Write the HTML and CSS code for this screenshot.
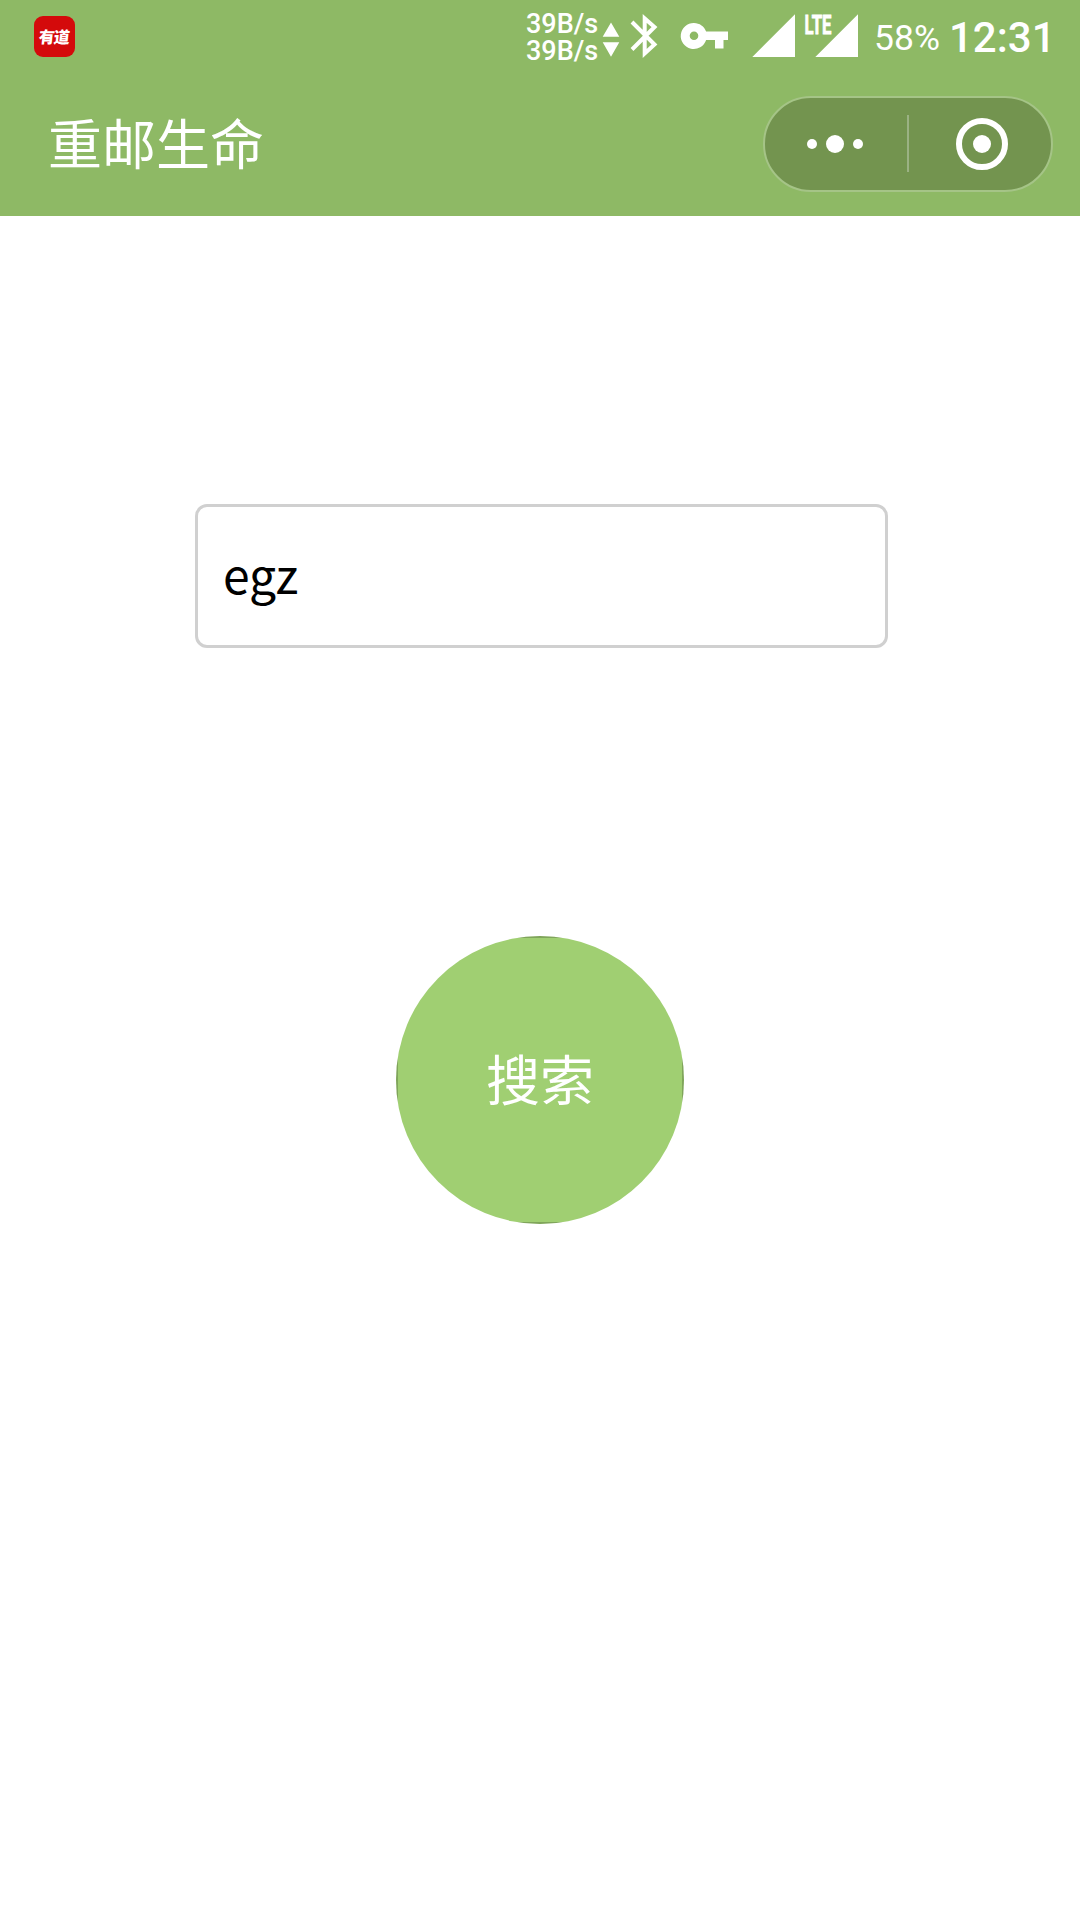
FILE: index.html
```html
<!DOCTYPE html>
<html lang="zh-CN">
<head>
<meta charset="utf-8">
<title>重邮生命</title>
<link rel="stylesheet" href="styles.css">
</head>
<body>
<header class="header">
  <div class="status-bar">
    <div class="app-badge"><span class="app-badge-text">有道</span></div>
    <div class="speed"><span>39B/s</span><span>39B/s</span></div>
    <svg class="arrows" width="18" height="36" viewBox="0 0 18 36"><path d="M9 .5 17.3 14.8H.7zM.7 20.2h16.6L9 34.8z"/></svg>
    <svg class="bluetooth" width="28" height="44" viewBox="0 0 28 44"><path d="M2 8 24.5 30.5 14.7 39.5V4.5L24.5 13 2 35.5" class="line"/></svg>
    <svg class="key" width="48" height="26" viewBox="0 0 48 26"><path fill-rule="evenodd" d="M13 0c5.6 0 10.300 3.500 12.100 8.500H47v8.500h-4.500v8.500H34V17h-8.900A13 13 0 1 1 13 0zm0 8.500a4.300 4.300 0 1 0 0 8.600 4.300 4.300 0 0 0 0-8.600z"/></svg>
    <svg class="signals" width="108" height="44" viewBox="0 0 108 44">
      <path d="M.3 43 43 .3V43zM63.300 43 106 .3V43z"/>
      <text x="52.500" y="19.500" textLength="27" lengthAdjust="spacingAndGlyphs" class="lte">LTE</text>
    </svg>
    <span class="battery">58%</span>
    <span class="clock">12:31</span>
  </div>
  <div class="nav-bar">
    <h1 class="title">重邮生命</h1>
    <div class="capsule">
      <svg class="more" width="58" height="20" viewBox="0 0 58 20"><circle cx="6" cy="10" r="5"/><circle cx="29" cy="10" r="9"/><circle cx="52" cy="10" r="5"/></svg>
      <span class="divider"></span>
      <svg class="close" width="52" height="52" viewBox="0 0 52 52"><circle cx="26" cy="26" r="23" class="ring"/><circle cx="26" cy="26" r="9"/></svg>
    </div>
  </div>
</header>
<main class="content">
  <input class="search-input" type="text" value="egz">
  <button class="search-button" type="button">搜索</button>
</main>
</body>
</html>
```
FILE: styles.css
```css
* { box-sizing: border-box; }
body {
  margin: 0;
  min-height: 1920px;
  background: #fff;
  font-family: "Noto Sans CJK SC", sans-serif;
}
svg { display: block; flex: none; fill: #fff; overflow: visible; }
.header { height: 216px; background: #8eb965; color: #fff; }
.status-bar {
  display: flex;
  align-items: flex-start;
  height: 72px;
  padding-left: 34px;
  font-family: Roboto, sans-serif;
  white-space: nowrap;
}
.status-bar > * { flex: none; }
.app-badge {
  display: flex;
  align-items: center;
  justify-content: center;
  width: 41px;
  height: 41px;
  margin-top: 16px;
  border-radius: 9px;
  background: #d40a0b;
}
.app-badge-text {
  margin-top: -2px;
  font: 900 16px/16px "Noto Sans CJK SC", sans-serif;
  letter-spacing: -1px;
  transform: skewX(-6deg);
}
.speed {
  display: flex;
  flex-direction: column;
  width: 72px;
  margin: 11px 0 0 451px;
  font-size: 27px;
  font-weight: 500;
  line-height: 27px;
}
.arrows { margin: 22px 0 0 4px; }
.bluetooth { margin: 14px 0 0 10px; }
.line { fill: none; stroke: #fff; stroke-width: 4; }
.key { margin: 23px 0 0 23px; }
.signals { margin: 14px 0 0 23px; }
.lte { font: 700 25px Roboto, sans-serif; stroke: #fff; stroke-width: .8; }
.battery { width: 75px; margin: 17px 0 0 14px; font-size: 35.500px; line-height: 42px; }
.clock { margin-top: 13px; font-size: 42px; font-weight: 500; line-height: 50px; }
.nav-bar {
  display: flex;
  align-items: center;
  justify-content: space-between;
  height: 144px;
  padding: 0 27px 0 48px;
}
.title { margin: 0; padding-bottom: 4px; font-size: 54px; font-weight: 400; line-height: 78px; }
.capsule {
  display: flex;
  align-items: center;
  width: 290px;
  height: 96px;
  border: 2px solid #a5c487;
  border-radius: 48px;
  background: #73944f;
}
.more { margin-left: 41px; }
.divider { width: 2px; height: 57px; margin: 0 0 1px 43px; background: #9bb284; }
.close { margin-left: 47px; }
.ring { fill: none; stroke: #fff; stroke-width: 6; }
.content {
  display: flex;
  flex-direction: column;
  align-items: center;
  gap: 288px;
  padding-top: 288px;
}
.search-input {
  width: 693px;
  height: 144px;
  margin-left: 3px;
  padding: 0 25px 6px;
  border: 3px solid #d0d0d0;
  border-radius: 12px;
  background: #fff;
  color: #000;
  font: 400 48px "Noto Sans CJK SC", sans-serif;
  outline: none;
}
.search-button {
  position: relative;
  width: 288px;
  height: 288px;
  padding: 0 0 5px;
  overflow: hidden;
  border: 0;
  border-radius: 50%;
  background: #a0cf72;
  color: #fff;
  font: 400 54px "Noto Sans CJK SC", sans-serif;
}
/* Square hairline, clipped by the round button */
.search-button::after {
  content: "";
  position: absolute;
  inset: 0;
  border: 2px solid rgba(0, 0, 0, .2);
}
```
